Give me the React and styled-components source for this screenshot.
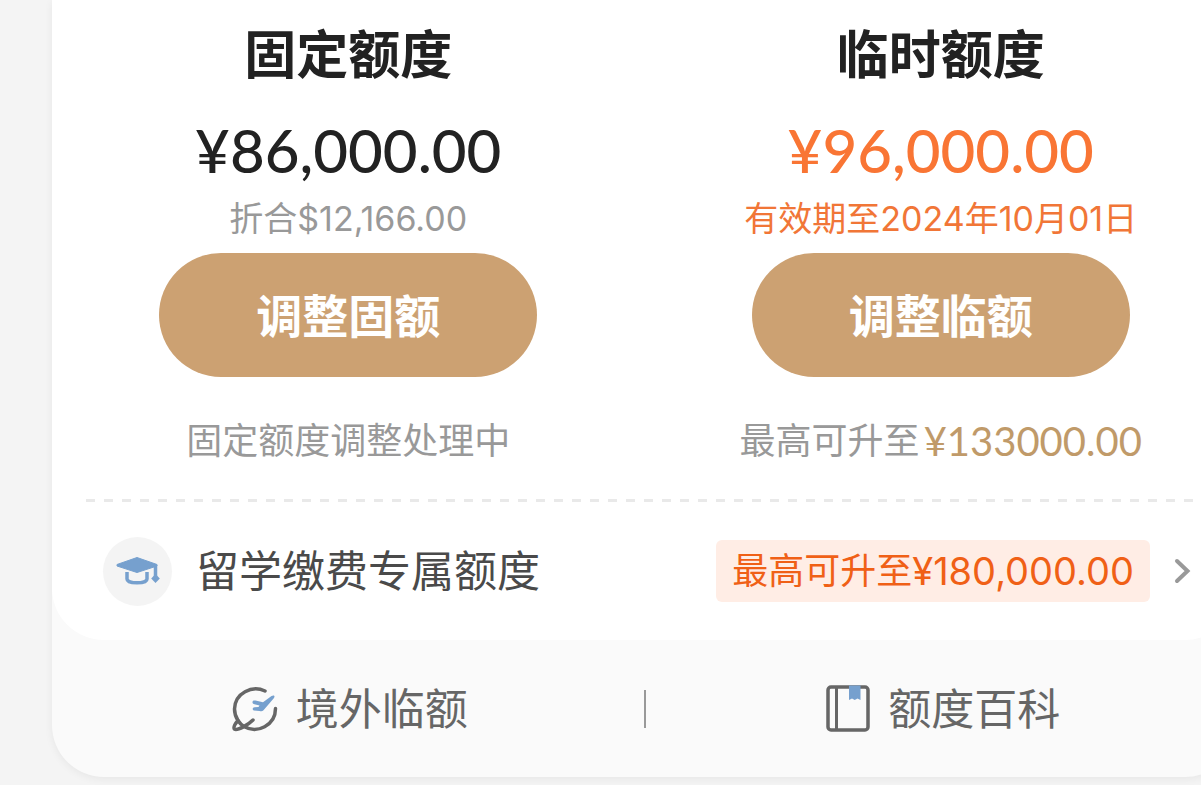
import React from "react";
import styled, { createGlobalStyle } from "styled-components";

const CJK = `"Noto Sans CJK SC", sans-serif`;

const GlobalStyle = createGlobalStyle`
    *, *::before, *::after {
        box-sizing: border-box;
    }
    body {
        margin: 0;
        background: #f4f4f4;
        font-family: Inter, ${CJK};
        color: #222;
        overflow: hidden;
    }
    button {
        border: 0;
        padding: 0;
        margin: 0;
        background: none;
        font: inherit;
        color: inherit;
        cursor: pointer;
    }
    h2, p {
        margin: 0;
    }
`;

/* the card runs past the right edge of the viewport */
const Page = styled.main`
    padding: 0 0 8px 52px;
    margin-right: -36px;
`;

const Card = styled.section`
    background: #fafafa;
    border-radius: 0 0 52px 52px;
    box-shadow: 0 2px 8px rgba(0, 0, 0, 0.06);
`;

const CardBody = styled.div`
    background: #fff;
    border-radius: 0 0 52px 52px;
`;

const Limits = styled.div`
    display: grid;
    grid-template-columns: 1fr 1fr;
    padding: 20px 0 34px;
`;

const Limit = styled.div`
    display: flex;
    flex-direction: column;
    align-items: center;
    white-space: nowrap;
`;

const Title = styled.h2`
    font: 700 52px/64px ${CJK};
`;

const Amount = styled.p`
    margin-top: 30px;
    font: 500 60px/72px Lato, ${CJK};
    color: ${props => props.color};
`;

const Hint = styled.p`
    margin-top: 13px;
    font-size: 34px;
    line-height: 40px;
    color: ${props => props.color};
`;

const AdjustButton = styled.button`
    && {
        margin-top: 14px;
        padding-bottom: 4px;
        width: 378px;
        height: 124px;
        border-radius: 62px;
        background: #cca172;
        color: #fff;
        font: 700 46px/56px ${CJK};
    }
`;

const Note = styled.p`
    display: flex;
    align-items: center;
    gap: 4px;
    margin-top: 40px;
    font-size: 36px;
    line-height: 48px;
    color: #999;
`;

const NoteAmount = styled.span`
    font-family: Lato, ${CJK};
    font-size: 40px;
    color: #c09a69;
`;

const Dashes = styled.div`
    height: 3px;
    margin-left: 34px;
    background: repeating-linear-gradient(90deg, #e9e9e9 0 9px, transparent 9px 18px);
`;

const StudyRow = styled.button`
    && {
        display: flex;
        align-items: center;
        width: 100%;
        height: 138px;
        padding: 0 46px 0 51px;
        text-align: left;
        white-space: nowrap;
    }
`;

const Round = styled.span`
    display: flex;
    align-items: center;
    justify-content: center;
    width: 69px;
    height: 69px;
    border-radius: 50%;
    background: #f4f4f4;
`;

const RowLabel = styled.span`
    flex: 1;
    margin-left: 24px;
    font-size: 43px;
    line-height: 60px;
    color: #4a4a4a;
`;

const Badge = styled.span`
    display: flex;
    align-items: center;
    margin-right: 24px;
    padding: 0 16px;
    border-radius: 6px;
    background: #ffede5;
    color: #f06016;
    font-size: 36px;
    line-height: 62px;
`;

const BadgeAmount = styled.span`
    font-size: 38px;
`;

const Footer = styled.nav`
    display: flex;
    align-items: center;
    height: 137px;
`;

const FooterButton = styled.button`
    && {
        display: flex;
        flex: 1;
        align-items: center;
        justify-content: center;
        gap: 18px;
        padding-left: 4px;
        font-size: 43px;
        line-height: 60px;
        color: #666;
    }
`;

const Divider = styled.span`
    width: 2px;
    height: 38px;
    background: #999;
`;

function CapIcon() {
    return (
        <svg width="44" height="28" viewBox="0 0 44 28" aria-hidden="true">
            <path d="M1 7.500 21 .5 41 7.500V9L21 15.500 1 9Z" fill="#76a0ce" stroke="#76a0ce" strokeLinejoin="round" />
            <path d="M11 15v7c0 5 20 5 20 0v-7M39.500 8v12" fill="none" stroke="#76a0ce" strokeWidth="3.500" />
            <path d="m39.500 17 4.300 4.500-4.300 4.500-4.300-4.500Z" fill="#76a0ce" />
        </svg>
    );
}

function TravelIcon() {
    return (
        <svg width="46" height="46" viewBox="0 0 46 46" fill="none" aria-hidden="true">
            <path
                d="M33 5C20-1 3 7 2.500 23c0 5 1.500 8.500 3.500 11.500C3 38 1 41.500 2.500 43.200c3.500 1.500 14-4.700 18.500-9.200"
                stroke="#666"
                strokeWidth="3.500"
                strokeLinecap="round"
                strokeLinejoin="round"
            />
            <path
                d="M6 34.500c1.500 2.500 3.500 4.500 6 6C25 48 43.500 39.500 43.500 22.500"
                stroke="#666"
                strokeWidth="3.500"
                strokeLinecap="round"
            />
            <path
                d="M20.500 16.500c-.3-2 1.500-2.300 3-2l7.500 1.700 8.500-6.200c2.500-1.500 4 0 2.300 2.300L31.500 24.300c-1 1.200-2.500 1.200-4 .7l-5.500-.5c-2-.8-1.500-3 .5-3.200l4-.3 1-1.500-5-1.200c-1-.3-1.800-.8-2-1.800Z"
                fill="#76a0ce"
            />
        </svg>
    );
}

function BookIcon() {
    return (
        <svg width="44" height="47" viewBox="0 0 44 47" aria-hidden="true">
            <rect x="2" y="2" width="40" height="43" rx="3" fill="none" stroke="#666" strokeWidth="3.500" />
            <path d="M10.500 2v43" stroke="#666" strokeWidth="3" />
            <path d="M23 .5h11.500V15L31.500 13.500 28.700 15l-2.700-1.500L23 15Z" fill="#76a0ce" />
        </svg>
    );
}

function Chevron() {
    return (
        <svg width="17" height="26" viewBox="0 0 17 26" aria-hidden="true">
            <path d="m3 3 10.500 10L3 23" fill="none" stroke="#999" strokeWidth="4" strokeLinecap="round" />
        </svg>
    );
}

export default function App() {
    return (
        <Page>
            <GlobalStyle />
            <Card>
                <CardBody>
                    <Limits>
                        <Limit>
                            <Title>固定额度</Title>
                            <Amount color="#222">¥86,000.00</Amount>
                            <Hint color="#999">折合$12,166.00</Hint>
                            <AdjustButton>调整固额</AdjustButton>
                            <Note>固定额度调整处理中</Note>
                        </Limit>
                        <Limit>
                            <Title>临时额度</Title>
                            <Amount color="#f97534">¥96,000.00</Amount>
                            <Hint color="#f17637">有效期至2024年10月01日</Hint>
                            <AdjustButton>调整临额</AdjustButton>
                            <Note>
                                最高可升至<NoteAmount>¥133000.00</NoteAmount>
                            </Note>
                        </Limit>
                    </Limits>
                    <Dashes />
                    <StudyRow>
                        <Round>
                            <CapIcon />
                        </Round>
                        <RowLabel>留学缴费专属额度</RowLabel>
                        <Badge>
                            最高可升至<BadgeAmount>¥180,000.00</BadgeAmount>
                        </Badge>
                        <Chevron />
                    </StudyRow>
                </CardBody>
                <Footer>
                    <FooterButton>
                        <TravelIcon />
                        境外临额
                    </FooterButton>
                    <Divider />
                    <FooterButton>
                        <BookIcon />
                        额度百科
                    </FooterButton>
                </Footer>
            </Card>
        </Page>
    );
}
